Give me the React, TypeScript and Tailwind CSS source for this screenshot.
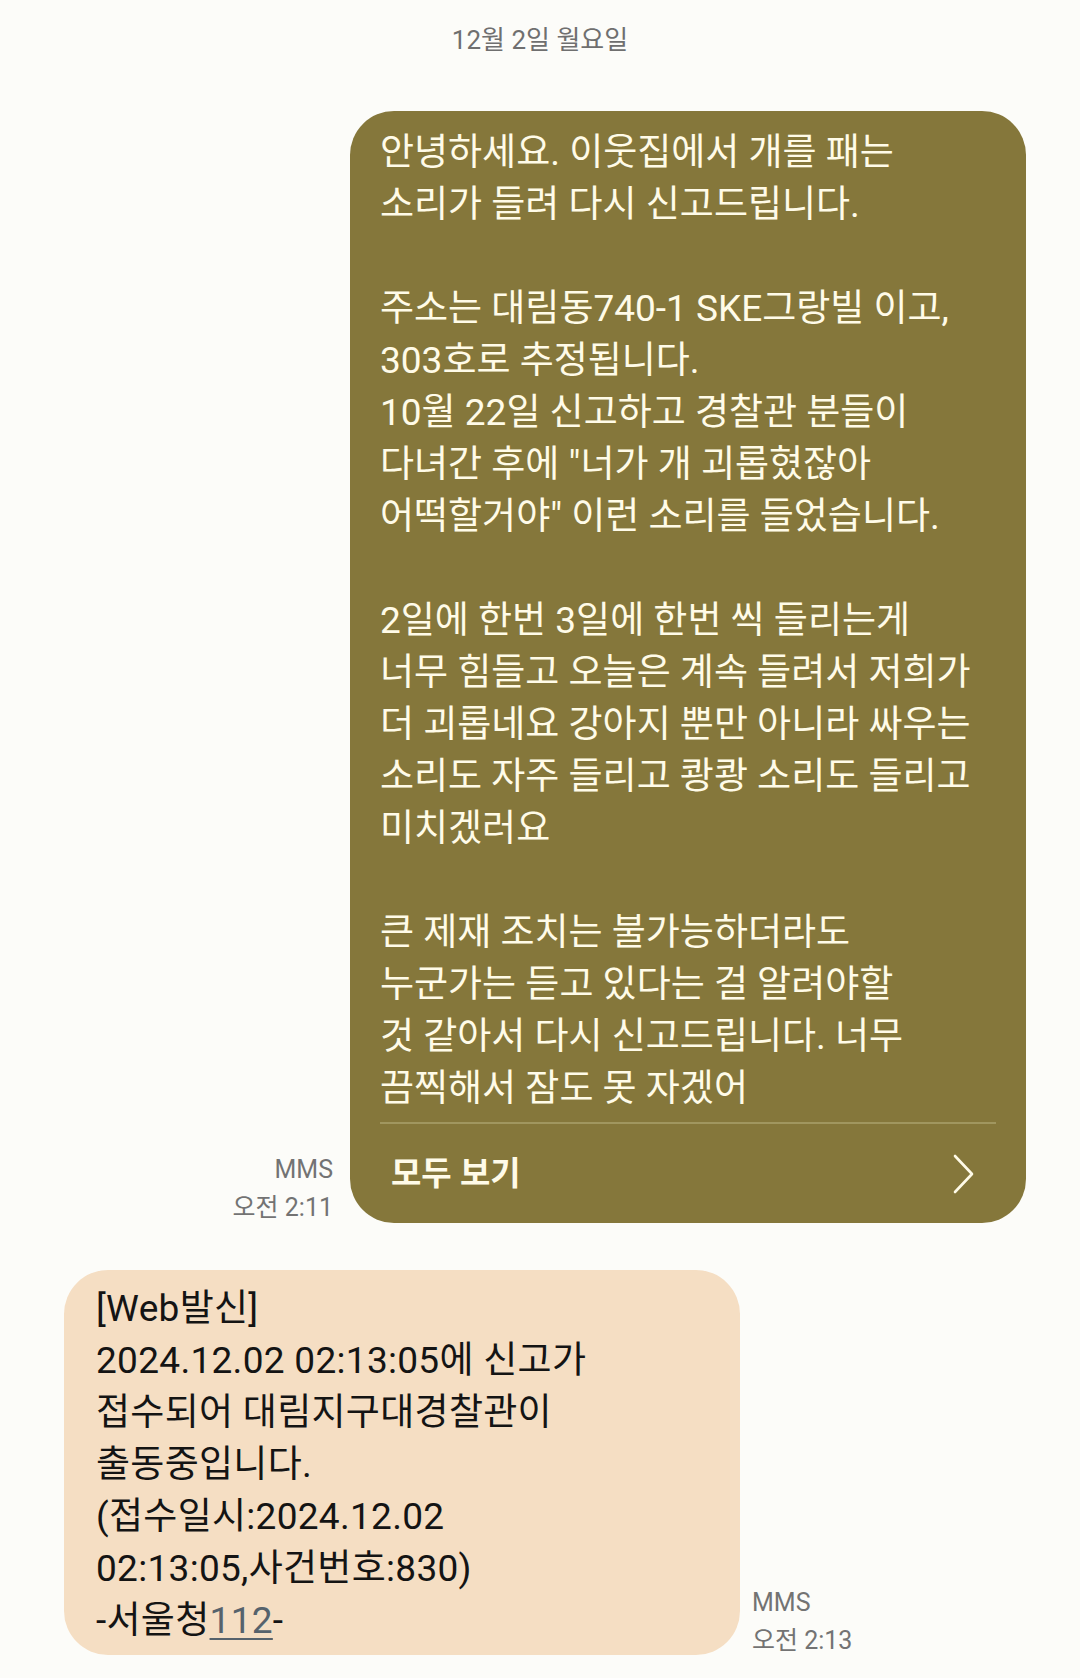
import React from "react";

const sentLines = [
  "안녕하세요. 이웃집에서 개를 패는",
  "소리가 들려 다시 신고드립니다.",
  "",
  "주소는 대림동740-1 SKE그랑빌 이고,",
  "303호로 추정됩니다.",
  "10월 22일 신고하고 경찰관 분들이",
  "다녀간 후에 \"너가 개 괴롭혔잖아",
  "어떡할거야\" 이런 소리를 들었습니다.",
  "",
  "2일에 한번 3일에 한번 씩 들리는게",
  "너무 힘들고 오늘은 계속 들려서 저희가",
  "더 괴롭네요 강아지 뿐만 아니라 싸우는",
  "소리도 자주 들리고 쾅쾅 소리도 들리고",
  "미치겠러요",
  "",
  "큰 제재 조치는 불가능하더라도",
  "누군가는 듣고 있다는 걸 알려야할",
  "것 같아서 다시 신고드립니다. 너무",
  "끔찍해서 잠도 못 자겠어",
];

const receivedLines = [
  "[Web발신]",
  "2024.12.02 02:13:05에 신고가",
  "접수되어 대림지구대경찰관이",
  "출동중입니다.",
  "(접수일시:2024.12.02",
  "02:13:05,사건번호:830)",
];

function Meta({ time, align }: { time: string; align: "start" | "end" }) {
  return (
    <div
      className={
        align === "end"
          ? "-mb-[2px] flex flex-col items-end gap-[4px] text-[25px] leading-[34px] text-[#737373]"
          : "-mb-[3px] flex flex-col items-start gap-[4px] text-[25px] leading-[34px] text-[#737373]"
      }
    >
      <span>MMS</span>
      <span>{time}</span>
    </div>
  );
}

export default function App() {
  return (
    <div
      className="w-[1080px] h-[1678px] bg-[#fcfcf9] overflow-hidden"
      style={{ fontFamily: 'Roboto, "Noto Sans CJK KR", "Noto Sans", sans-serif' }}
    >
      <div className="h-[80px] flex items-center justify-center text-[26px] text-[#6f6f6f]">
        12월 2일 월요일
      </div>

      <div className="mt-[31px] flex justify-end items-end gap-[17px] pr-[54px]">
        <Meta time="오전 2:11" align="end" />
        <div className="w-[676px] rounded-[44px] bg-[#85773b] px-[30px] pt-[16px]">
          <div className="text-[37px] leading-[52px] text-[#fffbe8]">
            {sentLines.map((line, i) => (
              <div key={i} className="h-[52px] whitespace-nowrap">
                {line}
              </div>
            ))}
          </div>
          <div className="mt-[7px] h-[2px] bg-[#a0965f]" />
          <div className="h-[99px] flex items-center justify-between pl-[11px] pr-[21px]">
            <span className="text-[33px] font-bold text-[#fffbe8]">모두 보기</span>
            <svg width="22" height="40" viewBox="0 0 22 40" fill="none">
              <polyline
                points="2,2 19,20 2,38"
                stroke="#fffbe8"
                strokeWidth="2.6"
                strokeLinecap="round"
                strokeLinejoin="round"
              />
            </svg>
          </div>
        </div>
      </div>

      <div className="mt-[47px] flex items-end gap-[12px] pl-[64px]">
        <div className="w-[676px] rounded-[44px] bg-[#f5dec3] px-[32px] pt-[13px] pb-[8px]">
          <div className="text-[37px] leading-[52px] text-[#141414] tracking-[0.3px]">
            {receivedLines.map((line, i) => (
              <div key={i} className="h-[52px] whitespace-nowrap">
                {line}
              </div>
            ))}
            <div className="h-[52px] whitespace-nowrap">
              -서울청
              <span className="text-[#56626c] underline decoration-[2px] underline-offset-[5px]">112</span>-
            </div>
          </div>
        </div>
        <Meta time="오전 2:13" align="start" />
      </div>
    </div>
  );
}
